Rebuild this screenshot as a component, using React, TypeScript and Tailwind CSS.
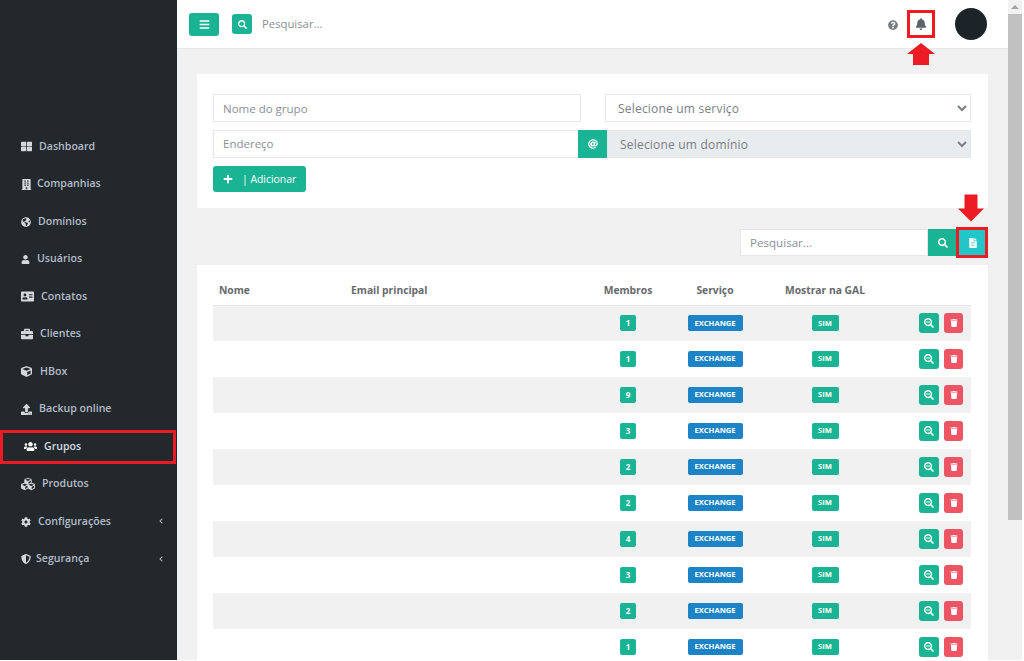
import {
  FaAddressCard,
  FaAt,
  FaBars,
  FaBell,
  FaBriefcase,
  FaBuilding,
  FaChevronLeft,
  FaCog,
  FaCube,
  FaCubes,
  FaFileAlt,
  FaGlobeAmericas,
  FaPlus,
  FaQuestionCircle,
  FaSearch,
  FaSearchMinus,
  FaShieldAlt,
  FaThLarge,
  FaTrash,
  FaUpload,
  FaUser,
  FaUsers,
} from "react-icons/fa";
import type { IconType } from "react-icons";

const MENU: { label: string; icon: IconType; size: number; gap: string; sub?: boolean; active?: boolean }[] = [
  { label: "Dashboard", icon: FaThLarge, size: 11, gap: "gap-[7px]" },
  { label: "Companhias", icon: FaBuilding, size: 11, gap: "gap-[5px]" },
  { label: "Domínios", icon: FaGlobeAmericas, size: 10, gap: "gap-[7px]" },
  { label: "Usuários", icon: FaUser, size: 9, gap: "gap-[7px]" },
  { label: "Contatos", icon: FaAddressCard, size: 13, gap: "gap-[7px]" },
  { label: "Clientes", icon: FaBriefcase, size: 12, gap: "gap-[7px]" },
  { label: "HBox", icon: FaCube, size: 11, gap: "gap-[8px]" },
  { label: "Backup online", icon: FaUpload, size: 11, gap: "gap-[7px]" },
  { label: "Grupos", icon: FaUsers, size: 13, gap: "gap-[7px]", active: true },
  { label: "Produtos", icon: FaCubes, size: 14, gap: "gap-[7px]" },
  { label: "Configurações", icon: FaCog, size: 10, gap: "gap-[7px]", sub: true },
  { label: "Segurança", icon: FaShieldAlt, size: 10, gap: "gap-[5px]", sub: true },
];

const MEMBERS = [1, 1, 9, 3, 2, 2, 4, 3, 2, 1];

function Sidebar() {
  return (
    <aside className="w-[177px] shrink-0 bg-[#23282c] pt-[128px] font-semibold text-[10.6px] text-[#b4bcc8]">
      {MENU.map((m) => {
        const Icon = m.icon;
        return (
          <div
            key={m.label}
            className={`relative flex h-[37.5px] items-center ${m.active ? "pl-[24px] text-[#d5dae2]" : "pl-[21px]"}`}
          >
            <span className={`flex items-center ${m.gap}`}>
              <Icon size={m.size} className={m.active ? "text-white" : "text-[#d3d8de]"} />
              {m.label}
            </span>
            {m.sub && <FaChevronLeft size={6} className="absolute left-[158px] top-[15px] text-[#b4bcc8]" />}
            {m.active && (
              <div className="absolute left-0 top-[2px] h-[34px] w-[176px] border-[3px] border-[#ed1c24]" />
            )}
          </div>
        );
      })}
    </aside>
  );
}

function Topbar() {
  return (
    <header className="flex h-[49px] shrink-0 items-center border-b border-[#e7eaec] bg-white pl-3 pr-[21px]">
      <button className="flex h-[23px] w-[30px] items-center justify-center rounded-[3px] bg-[#1ab394] text-white">
        <FaBars size={11} />
      </button>
      <button className="ml-[13px] flex h-5 w-5 items-center justify-center rounded-[3px] bg-[#1ab394] text-white">
        <FaSearch size={9} />
      </button>
      <span className="ml-[10px] pt-px text-[11.3px] text-[#8a9097]">Pesquisar...</span>
      <FaQuestionCircle size={10} className="ml-auto mt-px text-[#777b7e]" />
      <div className="relative ml-[9px] flex h-7 w-7 items-center justify-center">
        <FaBell size={12} className="text-[#5f6468]" />
        <div className="absolute inset-0 border-[3px] border-[#ed1c24]" />
        <svg viewBox="0 0 28 22" className="absolute left-0 top-[33px] h-[22px] w-7">
          <path d="M14 0 L28 11 H22 V22 H6 V11 H0 Z" fill="#ed1c24" />
        </svg>
      </div>
      <div className="ml-5 h-8 w-8 rounded-full bg-[#1c2429]" />
    </header>
  );
}

function GroupForm() {
  return (
    <section className="bg-white px-4 pb-4 pt-5 text-[11.5px] shadow-[0_0_1px_#e7eaec]">
      <div className="grid grid-cols-[368px_366px] gap-x-6 gap-y-2">
        <div className="flex h-7 items-center border border-[#e5e6e7] pl-[9px] pt-px text-[#8a9097]">Nome do grupo</div>
        <select className="h-7 border border-[#e5e6e7] bg-white pl-2 text-[12px] text-[#7a7f85] tracking-[0.2px]">
          <option>Selecione um serviço</option>
        </select>
        <div className="col-span-2 flex h-7">
          <div className="flex w-[365px] items-center border border-r-0 border-[#e5e6e7] pl-[9px] text-[#8a9097]">
            Endereço
          </div>
          <div className="flex w-[29px] items-center justify-center bg-[#1ab394] text-white">
            <FaAt size={10} />
          </div>
          <select
            disabled
            className="min-w-0 flex-1 border border-[#e5e6e7] bg-[#e9ecef] pl-2 text-[12px] text-[#7a7f85] tracking-[0.2px] opacity-100"
          >
            <option>Selecione um domínio</option>
          </select>
        </div>
      </div>
      <button className="mt-2 flex h-[26px] w-[93px] items-center rounded-[3px] bg-[#1ab394] pl-[10px] text-[10.4px] text-white">
        <FaPlus size={10} />
        <span className="ml-[9px] pt-px">| Adicionar</span>
      </button>
    </section>
  );
}

function SearchRow() {
  return (
    <div className="mt-[21px] flex h-[27px] justify-end pr-px text-[11.6px]">
      <div className="flex w-[188px] items-center border border-[#e5e6e7] bg-white px-[9px] pt-px text-[#8a9097]">
        Pesquisar...
      </div>
      <button className="flex w-[30px] items-center justify-center bg-[#1ab394] text-white">
        <FaSearch size={10} />
      </button>
      <button className="relative flex w-[29px] items-center justify-center bg-[#23c6c8] text-white">
        <FaFileAlt size={10} />
        <div className="absolute -left-[2px] -right-px -inset-y-[2px] border-[3px] border-[#ed1c24]" />
        <svg viewBox="0 0 28 29" className="absolute -top-[36px] left-0 h-[30px] w-[26px]">
          <path d="M7 0 H21 V15 H28 L14 29 L0 15 H7 Z" fill="#ed1c24" />
        </svg>
      </button>
    </div>
  );
}

function GroupTable() {
  return (
    <section className="mt-[9px] bg-white px-4 pt-3 shadow-[0_0_1px_#e7eaec]">
      <table className="w-[758px] table-fixed border-collapse text-[10.3px] text-[#676a6c]">
        <thead>
          <tr className="h-7 border-b border-[#e7e7e7] text-left font-bold">
            <th className="w-[132px] pb-px pl-[6px]">Nome</th>
            <th className="w-[245px] pb-px pl-[6px]">Email principal</th>
            <th className="w-[76px] pb-px text-center">Membros</th>
            <th className="w-[98px] pb-px text-center">Serviço</th>
            <th className="w-[122px] pb-px text-center">Mostrar na GAL</th>
            <th />
          </tr>
        </thead>
        <tbody>
          {MEMBERS.map((n, i) => (
            <tr key={i} className={`h-9 ${i % 2 === 0 ? "bg-[#f1f1f1]" : "bg-white"}`}>
              <td />
              <td />
              <td>
                <span className="mx-auto flex h-4 w-4 items-center justify-center rounded-[2px] bg-[#1ab394] text-[8px] font-bold text-white">
                  {n}
                </span>
              </td>
              <td>
                <span className="mx-auto flex h-4 w-[55px] items-center justify-center rounded-[2px] bg-[#1c84c6] text-[7.6px] font-bold text-white">
                  EXCHANGE
                </span>
              </td>
              <td>
                <span className="mx-auto flex h-4 w-[27px] items-center justify-center rounded-[2px] bg-[#1ab394] text-[7.6px] font-bold text-white">
                  SIM
                </span>
              </td>
              <td>
                <div className="flex justify-end gap-[5px] pr-2">
                  <button className="flex h-5 w-5 items-center justify-center rounded-[3px] bg-[#1ab394] text-white">
                    <FaSearchMinus size={10} />
                  </button>
                  <button className="flex h-5 w-[19px] items-center justify-center rounded-[3px] bg-[#ed5565] text-white">
                    <FaTrash size={8} />
                  </button>
                </div>
              </td>
            </tr>
          ))}
        </tbody>
      </table>
    </section>
  );
}

function Scrollbar() {
  return (
    <div className="flex w-[14px] shrink-0 flex-col bg-[#f1f1f1]">
      <div className="flex h-[14px] shrink-0 items-center justify-center">
        <div className="h-0 w-0 border-x-[4px] border-b-[4px] border-x-transparent border-b-[#a3a3a3]" />
      </div>
      <div className="h-[506px] bg-[#c1c1c1]" />
    </div>
  );
}

export default function App() {
  return (
    <div className="h-[661px] w-[1024px] overflow-hidden bg-white font-['Open_Sans',sans-serif]">
      <div className="flex h-[660px]">
        <Sidebar />
        <main className="flex w-[831px] shrink-0 flex-col overflow-hidden bg-[#f1f1f1]">
          <Topbar />
          <div className="px-5 pt-[25px]">
            <GroupForm />
            <SearchRow />
            <GroupTable />
          </div>
        </main>
        <Scrollbar />
      </div>
    </div>
  );
}
